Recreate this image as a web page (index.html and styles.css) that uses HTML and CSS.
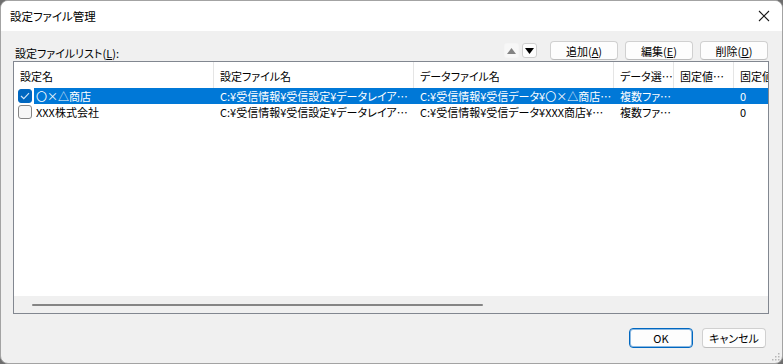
FILE: index.html
```html
<!DOCTYPE html>
<html lang="ja">
<head>
  <meta charset="UTF-8" />
  <title>設定ファイル管理</title>
  <link rel="stylesheet" href="styles.css">
</head>
<body>
  <div class="window">
    <div class="titlebar">
      <span class="title">設定ファイル管理</span>
      <svg class="close" width="12" height="12" viewBox="0 0 12 12">
        <path d="M1 1 L11 11 M11 1 L1 11" stroke="#1a1a1a" stroke-width="1.1" fill="none" />
      </svg>
    </div>

    <div class="content">
      <div class="toolbar">
        <span class="label">設定ファイルリスト(<u>L</u>):</span>
        <div class="tools">
          <span class="arrow disabled">
            <svg width="9" height="6" viewBox="0 0 9 6"><path d="M0 6 L4.5 0 L9 6 Z" fill="#838383" /></svg>
          </span>
          <span class="arrow">
            <svg width="9" height="6" viewBox="0 0 9 6"><path d="M0 0 L9 0 L4.5 6 Z" fill="#000" /></svg>
          </span>
          <button class="btn wide">追加(<u>A</u>)</button>
          <button class="btn wide">編集(<u>E</u>)</button>
          <button class="btn wide">削除(<u>D</u>)</button>
        </div>
      </div>

      <div class="list">
        <div class="row head">
          <div class="cell">設定名</div>
          <div class="cell">設定ファイル名</div>
          <div class="cell">データファイル名</div>
          <div class="cell">データ選択方法</div>
          <div class="cell">固定値の桁数</div>
          <div class="cell">固定値</div>
        </div>

        <div class="row selected">
          <div class="cell first">
            <span class="check on">
              <svg width="10" height="8" viewBox="0 0 10 8"><path d="M1 4 L3.8 6.6 L9 1.2" stroke="#cfe4f7" stroke-width="1.2" fill="none" /></svg>
            </span>
            <span class="name">〇×△商店</span>
          </div>
          <div class="cell">C:¥受信情報¥受信設定¥データレイアウト定義.xml</div>
          <div class="cell">C:¥受信情報¥受信データ¥〇×△商店¥受信データ.csv</div>
          <div class="cell">複数ファイル</div>
          <div class="cell"></div>
          <div class="cell">0</div>
        </div>

        <div class="row">
          <div class="cell first">
            <span class="check"></span>
            <span class="name">XXX株式会社</span>
          </div>
          <div class="cell">C:¥受信情報¥受信設定¥データレイアウト定義.xml</div>
          <div class="cell">C:¥受信情報¥受信データ¥XXX商店¥受信データ.csv</div>
          <div class="cell">複数ファイル</div>
          <div class="cell"></div>
          <div class="cell">0</div>
        </div>

        <div class="spacer"></div>
        <div class="hscroll"><span class="thumb"></span></div>
      </div>

      <div class="footer">
        <button class="btn default">OK</button>
        <button class="btn">キャンセル</button>
      </div>
    </div>

    <svg class="grip" width="8" height="8" viewBox="0 0 8 8">
      <rect x="6" y="0" width="1.5" height="1.5" fill="#b5b5b5" />
      <rect x="3" y="3" width="1.5" height="1.5" fill="#b5b5b5" />
      <rect x="6" y="3" width="1.5" height="1.5" fill="#b5b5b5" />
      <rect x="0" y="6" width="1.5" height="1.5" fill="#b5b5b5" />
      <rect x="3" y="6" width="1.5" height="1.5" fill="#b5b5b5" />
      <rect x="6" y="6" width="1.5" height="1.5" fill="#b5b5b5" />
    </svg>
  </div>
</body>
</html>
```

FILE: styles.css
```css
* { margin: 0; padding: 0; box-sizing: border-box; }

html, body {
  width: 783px;
  height: 364px;
  background: #6e6e6e;
  overflow: hidden;
}

body {
  font-family: "Noto Sans CJK JP", "Noto Sans", sans-serif;
  font-feature-settings: "palt";
  font-size: 11px;
  color: #000;
}

u { text-decoration: underline; text-underline-offset: 1px; }

.window {
  position: relative;
  width: 783px;
  height: 364px;
  background: #f0f0f0;
  border: 1px solid #a3a3a3;
  border-radius: 8px;
  overflow: hidden;
}

.titlebar {
  height: 30px;
  background: #fff;
  display: flex;
  align-items: center;
  justify-content: space-between;
  padding: 0 9px 0 9px;
}

.title { font-size: 11.5px; }

.close { margin-right: 3px; }

.content {
  padding: 0 13px 0 12px;
}

.toolbar {
  display: flex;
  justify-content: space-between;
  align-items: flex-end;
  height: 19px;
  margin-top: 10px;
  margin-bottom: 1px;
}

.label {
  line-height: 14px;
  padding-left: 2px;
}

.tools {
  display: flex;
  align-items: center;
  height: 19px;
  margin-right: 1px;
}

.arrow {
  width: 15px;
  height: 15px;
  display: flex;
  align-items: center;
  justify-content: center;
  background: #fdfdfd;
  border: 1px solid #cfcfcf;
  border-radius: 3px;
  margin-right: 3px;
}

.arrow.disabled {
  background: #f7f7f7;
  border-color: #f5f5f5;
}

.arrow:last-of-type { margin-right: 6px; }

.btn {
  font-family: inherit;
  font-feature-settings: "palt";
  font-size: 11px;
  color: #000;
  height: 19px;
  background: #fdfdfd;
  border: 1px solid #d0d0d0;
  border-bottom-color: #bdbdbd;
  border-radius: 4px;
  line-height: 16px;
}

.btn.wide {
  width: 68px;
  margin-left: 7px;
}

.list {
  height: 253px;
  background: #fff;
  border: 1px solid #828790;
  display: flex;
  flex-direction: column;
  overflow: hidden;
}

.row {
  display: grid;
  grid-template-columns: 200px 200px 200px 60px 60px 60px;
  height: 16px;
  line-height: 16px;
  flex-shrink: 0;
}

.row.head {
  height: 26px;
  line-height: 26px;
}

.row.head .cell {
  box-shadow: inset -1px 0 0 #e5e5e5;
  padding: 2px 0 0 6px;
  line-height: 24px;
}

.cell {
  white-space: nowrap;
  overflow: hidden;
  text-overflow: ellipsis;
  padding: 0 1px 0 6px;
}

.row.selected .cell {
  background: #0078d7;
  color: #fff;
}

.row .cell.first,
.row.selected .cell.first {
  background: none;
  display: flex;
  align-items: center;
  padding: 0;
}

.check {
  flex-shrink: 0;
  width: 14px;
  height: 14px;
  margin: 0 2px 0 4px;
  border: 1px solid #858585;
  background: #f7f7f7;
  border-radius: 3px;
  display: flex;
  align-items: center;
  justify-content: center;
}

.check.on {
  background: #0067c0;
  border-color: #0067c0;
}

.name {
  flex: 1;
  height: 16px;
  padding-left: 2px;
  overflow: hidden;
  text-overflow: ellipsis;
}

.row.selected .name {
  background: #0078d7;
  color: #fff;
}

.spacer { flex: 1; }

.hscroll {
  height: 17px;
  background: #f0f0f0;
  display: flex;
  align-items: center;
  padding-left: 18px;
}

.thumb {
  width: 451px;
  height: 2px;
  background: #858585;
  border-radius: 1px;
}

.footer {
  display: flex;
  justify-content: flex-end;
  gap: 9px;
  margin-top: 14px;
  padding-right: 3px;
}

.footer .btn {
  width: 64px;
  height: 20px;
}

.btn.default {
  border: 1px solid #0067c0;
  box-shadow: inset 0 0 0 1px rgba(0, 103, 192, 0.45);
}

.grip {
  position: absolute;
  right: 2px;
  bottom: 2px;
}
```
